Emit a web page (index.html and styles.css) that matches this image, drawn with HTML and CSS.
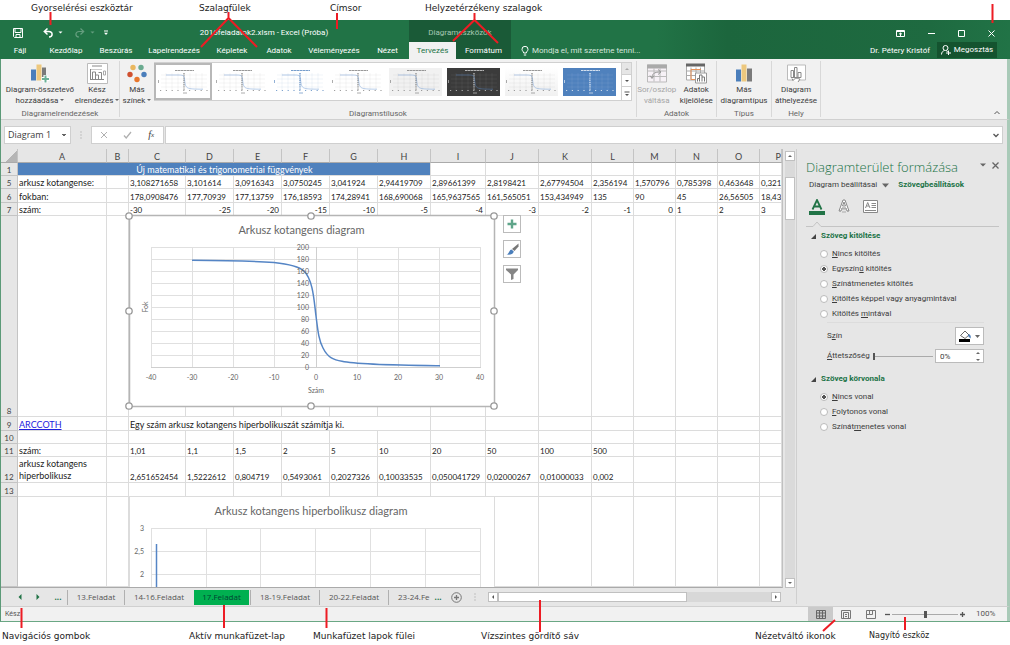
FILE: index.html
```html
<!DOCTYPE html>
<html lang="hu">
<head>
<meta charset="utf-8">
<title>Excel képernyő részei</title>
<link rel="stylesheet" href="styles.css">
</head>
<body>
<svg class="defs" aria-hidden="true">
  <symbol id="thumb" viewBox="0 0 53 28">
    <path d="M4 7h46M4 11h46M4 15h46M4 19h46M9 5v17M15 5v17M21 5v17M33 5v17M39 5v17M45 5v17" stroke="currentColor" stroke-opacity=".12" stroke-width=".6" fill="none"/>
    <path d="M18 2.500h19" stroke="currentColor" stroke-width="1.200" stroke-dasharray="2.500 .4" opacity=".75"/>
    <path d="M27 5v17" stroke="currentColor" stroke-width="1.500" stroke-dasharray="1.400 .8" opacity=".7"/>
    <path d="M3 22.500h48" stroke="currentColor" stroke-width="1" stroke-dasharray="1.200 4.600" opacity=".7"/>
    <path d="M26 25h4M1.500 12v3" stroke="currentColor" stroke-width="1" opacity=".6"/>
    <path d="M9 7h12c7 0 6 1 7 8 1 6 3 6 18 6.200" stroke="#5b8fcf" stroke-opacity=".6" stroke-width=".7" fill="none"/>
  </symbol>
</svg>
<div class="captions captions-top">
  <span>Gyorselérési eszköztár</span><span>Szalagfülek</span><span>Címsor</span><span>Helyzetérzékeny szalagok</span>
</div>

<div class="window">
  <header class="head">
    <div class="titlebar">
      <div class="qat">
        <button aria-label="Mentés"><svg width="10" height="10" viewBox="0 0 10 10" fill="none" stroke="#fff"><path d="M.5 .5h9v9h-8l-1-1zM2 .5v4h6v-4M3 9.500v-3h4v3"/></svg></button>
        <button aria-label="Visszavonás"><svg width="20" height="10" viewBox="0 0 20 10" fill="none" stroke="#fff" stroke-width="1.500"><path d="M4.500 .5L1.300 3.500l3.200 3M1.500 3.500h4.300c4.500 0 4.200 5.500 .2 5.500"/><path d="M15.500 3.500h4l-2 2z" fill="#fff" stroke="none"/></svg></button>
        <button aria-label="Ismét" class="dim"><svg width="20" height="10" viewBox="0 0 20 10" fill="none" stroke="#fff" stroke-width="1.200"><path d="M5.500 .5l3.200 3-3.200 3M8.500 3.500H4.200C-.3 3.500 0 9 4 9"/><path d="M15.500 3.500h4l-2 2z" fill="#fff" stroke="none"/></svg></button>
        <button aria-label="Testreszabás"><svg width="6" height="6" viewBox="0 0 6 6"><path d="M1 .5h4v1H1zM1 2.800h4L3 5z" fill="#fff"/></svg></button>
      </div>
      <div class="doc-title">2016feladatok2.xlsm - Excel (Próba)</div>
      <div class="context-title">Diagrameszközök</div>
      <div class="win-buttons">
        <button aria-label="Menüszalag"><svg width="9" height="7" viewBox="0 0 9 7" fill="none" stroke="#fff"><path d="M.5 .5h8v6h-8zM.5 1.500h8M4.500 6V3M3 4.300L4.500 3 6 4.300"/></svg></button>
        <button aria-label="Kis méret"><svg width="7" height="7" viewBox="0 0 7 7" stroke="#fff"><path d="M0 3.500h7"/></svg></button>
        <button aria-label="Teljes méret"><svg width="7" height="7" viewBox="0 0 7 7" fill="none" stroke="#fff"><path d="M.5 .5h6v6h-6z"/></svg></button>
        <button aria-label="Bezárás"><svg width="7" height="7" viewBox="0 0 7 7" stroke="#fff"><path d="M.5 .5l6 6M6.500 .5l-6 6"/></svg></button>
      </div>
    </div>
    <nav class="tabs">
      <button>Fájl</button><button>Kezdőlap</button><button>Beszúrás</button><button>Lapelrendezés</button><button>Képletek</button><button>Adatok</button><button>Véleményezés</button><button>Nézet</button><button class="active">Tervezés</button><button class="context">Formátum</button>
      <button class="tell"><svg width="8" height="10" viewBox="0 0 8 10" fill="none" stroke="#fff"><path d="M2.700 7C2.700 5.500 1 5 1 3.300a3 3 0 0 1 6 0C7 5 5.300 5.500 5.300 7zM2.800 9h2.400"/></svg>Mondja el, mit szeretne tenni...</button>
      <span class="user">Dr. Pétery Kristóf</span>
      <button class="share"><svg width="10" height="10" viewBox="0 0 10 10" fill="none" stroke="#fff"><circle cx="4.500" cy="3" r="2.500"/><path d="M.5 9.500c0-2.500 1.500-3.500 3-4M5.500 5.500L6.500 7M5 8h5M7.500 5.500v4.500"/></svg>Megosztás</button>
    </nav>
  </header>

  <section class="ribbon">
    <div class="group g-layouts">
      <div class="tools">
        <button class="wide"><svg width="20" height="20" viewBox="0 0 20 20"><path d="M1 6h5v11H1z" fill="#4a7ebb"/><path d="M6.500 1h5v16h-5z" fill="#edc87e"/><path d="M12 4h4v13h-4z" fill="#7a7a7a"/><path d="M11.500 15.500h8M15.500 11.500v8" stroke="#fff" stroke-width="4"/><path d="M12 15.500h7M15.500 12v7" stroke="#6bb197" stroke-width="2"/></svg><span>Diagram-összetevő<br>hozzáadása <i></i></span></button>
        <button><svg width="21" height="21" viewBox="0 0 21 21" fill="none" stroke="#888"><path d="M.5 .5h20v20H.5z" fill="#fff" stroke="#bbb"/><path d="M5 3h10M3 16.500h14M3.500 6v10" /><path d="M5.500 16V9h3v7M8.500 12h3v4M11.500 9.500h3V16"/><path d="M16.500 8h2v4h-2z" stroke="#aaa"/><path d="M4 6.500h11" stroke="#ccc"/></svg><span>Kész<br>elrendezés <i></i></span></button>
      </div>
      <div class="group-name">Diagramelrendezések</div>
    </div>
    <div class="group g-styles">
      <div class="tools">
        <button class="colors"><svg width="20" height="20" viewBox="0 0 20 20"><circle cx="6" cy="4" r="2.700" fill="#e9b75f"/><circle cx="14" cy="4" r="2.700" fill="#6bab90"/><circle cx="17" cy="11" r="2.700" fill="#4a7ebb"/><circle cx="10" cy="16" r="2.700" fill="#e8762c"/><circle cx="3" cy="11" r="2.700" fill="#d0502f"/></svg><span>Más<br>színek <i></i></span></button>
        <div class="gallery">
          <button class="thumb selected" aria-label="1. stílus"><svg><use href="#thumb"/></svg></button>
          <button class="thumb" aria-label="2. stílus"><svg><use href="#thumb"/></svg></button>
          <button class="thumb blue" aria-label="3. stílus"><svg><use href="#thumb"/></svg></button>
          <button class="thumb" aria-label="4. stílus"><svg><use href="#thumb"/></svg></button>
          <button class="thumb gray" aria-label="5. stílus"><svg><use href="#thumb"/></svg></button>
          <button class="thumb dark" aria-label="6. stílus"><svg><use href="#thumb"/></svg></button>
          <button class="thumb shade" aria-label="7. stílus"><svg><use href="#thumb"/></svg></button>
          <button class="thumb solid" aria-label="8. stílus"><svg><use href="#thumb"/></svg></button>
          <div class="gallery-nav">
            <button class="off" aria-label="Fel"><svg width="6" height="4" viewBox="0 0 6 4"><path d="M1 3h4L3 1z" fill="#aaa"/></svg></button>
            <button aria-label="Le"><svg width="6" height="4" viewBox="0 0 6 4"><path d="M1 1h4L3 3z" fill="#555"/></svg></button>
            <button aria-label="Egyebek"><svg width="6" height="6" viewBox="0 0 6 6"><path d="M.5 .5h5v1h-5zM1 3h4L3 5z" fill="#555"/></svg></button>
          </div>
        </div>
      </div>
      <div class="group-name">Diagramstílusok</div>
    </div>
    <div class="group g-data">
      <div class="tools">
        <button class="dim"><svg width="20" height="18" viewBox="0 0 20 18" fill="none" stroke="#bbb"><path d="M.5 .5h19v17H.5zM.5 6.500h19M.5 12h19M7 4v13M13 4v13" fill="#f7f2f7"/><path d="M0 0h20v4H0z" fill="#aaa" stroke="none"/><path d="M5 13.500c0-4 2-6 8-6M11 5l3 2.500-3 2.500M3 11l2 3 2-3" stroke="#999"/></svg><span>Sor/oszlop<br>váltása</span></button>
        <button><svg width="21" height="20" viewBox="0 0 21 20" fill="none"><path d="M.5 1.500h18v15H.5zM.5 7.500h18M.5 12h18M5 4v12M10 4v12M14.500 4v12" fill="#fff" stroke="#aaa"/><path d="M0 0h19v3H0z" fill="#666"/><path d="M15 6H5v10h5" stroke="#e8935a"/><path d="M9.500 9.500h11v10h-11z" fill="#fff" stroke="#999"/><path d="M11.500 18v-3h2v3M13.500 17v-5.500h2.500V18M16 13.500h2.500V18" stroke="#777"/></svg><span>Adatok<br>kijelölése</span></button>
      </div>
      <div class="group-name">Adatok</div>
    </div>
    <div class="group g-type">
      <div class="tools"><button><svg width="16" height="18" viewBox="0 0 16 18"><path d="M0 5h5v12H0z" fill="#4a7ebb"/><path d="M5.500 0h5v17h-5z" fill="#edc87e"/><path d="M11 4h5v13h-5z" fill="#7a7a7a"/></svg><span>Más<br>diagramtípus</span></button></div>
      <div class="group-name">Típus</div>
    </div>
    <div class="group g-place">
      <div class="tools"><button><svg width="19" height="18" viewBox="0 0 19 18" fill="none" stroke="#888"><path d="M.5 .5h18v15H.5z" fill="#fff" stroke="#bbb"/><path d="M4 13V6h2.500v7M7.500 13V3H10v10M11 13V8h3v5H4"/><path d="M6 16c2-3 5-2 7-1.500L11 17.500M6 16l-1-2" fill="#fff"/></svg><span>Diagram<br>áthelyezése</span></button></div>
      <div class="group-name">Hely</div>
    </div>
    <button class="collapse" aria-label="Összecsukás"><svg width="6" height="5" viewBox="0 0 6 5" fill="none" stroke="#555"><path d="M.5 4L3 1.500 5.500 4"/></svg></button>
  </section>

  <section class="formula-bar">
    <select class="name-box" aria-label="Név mező"><option>Diagram 1</option></select>
    <span class="grip"></span>
    <div class="fx">
      <button aria-label="Mégse"><svg width="8" height="8" viewBox="0 0 8 8" stroke="#b0b0b0"><path d="M1 1l6 6M7 1L1 7"/></svg></button>
      <button aria-label="Beírás"><svg width="9" height="8" viewBox="0 0 9 8" fill="none" stroke="#b0b0b0" stroke-width="1.300"><path d="M1 4.500L3.200 7 8 1"/></svg></button>
      <button class="fx-sign" aria-label="Függvény beszúrása">f<sub>x</sub></button>
    </div>
    <div class="formula">
      <input type="text" aria-label="Szerkesztőléc">
      <svg width="6" height="5" viewBox="0 0 6 5" fill="none" stroke="#555" stroke-width="1.300"><path d="M.5 1L3 3.500 5.500 1"/></svg>
    </div>
  </section>

  <main class="work">
    <div class="book">
      <div class="sheet-row">
        <div class="sheet">
          <table>
            <colgroup><col class="w18"><col class="w89"><col class="w22"><col class="w57"><col class="w48"><col class="w48"><col class="w48"><col class="w48"><col class="w53"><col class="w55"><col class="w53"><col class="w53"><col class="w42"><col class="w42"><col class="w42"><col class="w42"><col></colgroup>
            <thead><tr><th class="corner"></th><th>A</th><th>B</th><th>C</th><th>D</th><th>E</th><th>F</th><th>G</th><th>H</th><th>I</th><th>J</th><th>K</th><th>L</th><th>M</th><th>N</th><th>O</th><th class="cut">P</th></tr></thead>
            <tbody>
            <tr><th>1</th><td colspan="8" class="banner">Új matematikai és trigonometriai függvények</td><td></td><td></td><td></td><td></td><td></td><td></td><td></td><td></td></tr>
            <tr><th>5</th><td class="words">arkusz kotangense:</td><td></td><td>3,108271658</td><td>3,101614</td><td>3,0916343</td><td>3,0750245</td><td>3,041924</td><td>2,94419709</td><td>2,89661399</td><td>2,8198421</td><td>2,67794504</td><td>2,356194</td><td>1,570796</td><td>0,785398</td><td>0,463648</td><td>0,321</td></tr>
            <tr class="h14"><th>6</th><td class="words">fokban:</td><td></td><td>178,0908476</td><td>177,70939</td><td>177,13759</td><td>176,18593</td><td>174,28941</td><td>168,690068</td><td>165,9637565</td><td>161,565051</td><td>153,434949</td><td>135</td><td>90</td><td>45</td><td>26,56505</td><td>18,43</td></tr>
            <tr><th>7</th><td class="words">szám:</td><td></td><td>-30</td><td class="r">-25</td><td class="r">-20</td><td class="r">-15</td><td class="r">-10</td><td class="r">-5</td><td class="r">-4</td><td class="r">-3</td><td class="r">-2</td><td class="r">-1</td><td class="r">0</td><td>1</td><td>2</td><td>3</td></tr>
            <tr class="h201"><th>8</th><td></td><td></td><td></td><td></td><td></td><td></td><td></td><td></td><td></td><td></td><td></td><td></td><td></td><td></td><td></td><td></td></tr>
            <tr class="h14"><th>9</th><td class="words"><a href="#arccoth">ARCCOTH</a></td><td></td><td colspan="6" class="words">Egy szám arkusz kotangens hiperbolikuszát számítja ki.</td><td></td><td></td><td></td><td></td><td></td><td></td><td></td><td></td></tr>
            <tr><th>10</th><td></td><td></td><td></td><td></td><td></td><td></td><td></td><td></td><td></td><td></td><td></td><td></td><td></td><td></td><td></td><td></td></tr>
            <tr><th>11</th><td class="words">szám:</td><td></td><td>1,01</td><td>1,1</td><td>1,5</td><td>2</td><td>5</td><td>10</td><td>20</td><td>50</td><td>100</td><td>500</td><td></td><td></td><td></td><td></td></tr>
            <tr class="h26"><th>12</th><td class="words two-line">arkusz kotangens<br>hiperbolikusz</td><td></td><td>2,651652454</td><td>1,5222612</td><td>0,804719</td><td>0,5493061</td><td>0,2027326</td><td>0,10033535</td><td>0,050041729</td><td>0,02000267</td><td>0,01000033</td><td>0,002</td><td></td><td></td><td></td><td></td></tr>
            <tr class="h14"><th>13</th><td></td><td></td><td></td><td></td><td></td><td></td><td></td><td></td><td></td><td></td><td></td><td></td><td></td><td></td><td></td><td></td></tr>
            <tr class="rest"><th></th><td></td><td></td><td></td><td></td><td></td><td></td><td></td><td></td><td></td><td></td><td></td><td></td><td></td><td></td><td></td><td></td></tr>
            </tbody>
          </table>
          <svg class="chart chart-one" width="374" height="199" viewBox="125 211 374 199">
            <path d="M129.500 215.500h365v191h-365z" fill="#fff" stroke="#b5b5b5" stroke-width="1.500"/>
            <path d="M151 247.500h330M151 259.500h330M151 271.500h330M151 283.500h330M151 295.500h330M151 307.500h330M151 319.500h330M151 331.500h330M151 343.500h330M151 355.500h330M151.500 247v120M192.500 247v120M233.500 247v120M274.500 247v120M357.500 247v120M398.500 247v120M439.500 247v120M480.500 247v120" stroke="#e0e0e0"/>
            <path d="M151 367.500h330M316.500 247v120" stroke="#cfcfcf"/>
            <path d="M192 260.300C220 260.500 250 261 274 262.500C290 264.200 299 266.500 304 271C313 280 314 300 316 316C318 332 319 341 323 348C328 358 334 360 342 361.300C358 365 400 365.300 440 365.700" fill="none" stroke="#5585c5" stroke-width="1.500"/>
            <text class="chart-title" x="301.500" y="234">Arkusz kotangens diagram</text>
            <g class="axis end"><text x="309" y="250">200</text><text x="309" y="262">180</text><text x="309" y="274">160</text><text x="309" y="286">140</text><text x="309" y="298">120</text><text x="309" y="310">100</text><text x="309" y="322">80</text><text x="309" y="334">60</text><text x="309" y="346">40</text><text x="309" y="358">20</text><text x="309" y="370">0</text></g>
            <g class="axis mid"><text x="151" y="380">-40</text><text x="192" y="380">-30</text><text x="233" y="380">-20</text><text x="274" y="380">-10</text><text x="316" y="380">0</text><text x="357" y="380">10</text><text x="398" y="380">20</text><text x="439" y="380">30</text><text x="480" y="380">40</text><text x="316" y="393">Szám</text><text transform="translate(148 307) rotate(-90)">Fok</text></g>
            <g fill="#fff" stroke="#999" stroke-width="1.300"><circle cx="129" cy="216" r="3.200"/><circle cx="311" cy="216" r="3.200"/><circle cx="494" cy="216" r="3.200"/><circle cx="129" cy="311" r="3.200"/><circle cx="494" cy="311" r="3.200"/><circle cx="129" cy="406" r="3.200"/><circle cx="311" cy="406" r="3.200"/><circle cx="494" cy="406" r="3.200"/></g>
          </svg>
          <div class="chart-tools">
            <button aria-label="Diagramelemek"><svg width="12" height="12" viewBox="0 0 12 12"><path d="M1.500 6h9M6 1.500v9" stroke="#5fa58a" stroke-width="2.400"/></svg></button>
            <button aria-label="Diagramstílusok"><svg width="13" height="13" viewBox="0 0 13 13"><path d="M12.500 .5v3L8.500 8 6 6z" fill="#777"/><path d="M5.500 6.500l2.300 2C7 11.500 4 12 .5 11.500 3 11 3 7 5.500 6.500z" fill="#4a7ebb"/></svg></button>
            <button aria-label="Diagramszűrők"><svg width="12" height="12" viewBox="0 0 12 12"><path d="M0 .5h12v1.500L7.500 6.500V11L5 12V6.500L0 2z" fill="#858585"/></svg></button>
          </div>
          <svg class="chart chart-two" width="366" height="93" viewBox="129 497 366 93">
            <path d="M129 497h366v93H129z" fill="#fff"/><path d="M494.500 497v93M129.500 497v93" stroke="#dcdcdc"/>
            <path d="M151 528.500h330M151 551.500h330M151 574.500h330M151.500 528v62M206.500 528v62M260.500 528v62M315.500 528v62M370.500 528v62M425.500 528v62M480.500 528v62" stroke="#e0e0e0"/>
            <path d="M156.500 544v46" stroke="#5585c5" stroke-width="1.500"/>
            <text class="chart-title" x="311" y="515">Arkusz kotangens hiperbolikusz diagram</text>
            <g class="axis end"><text x="144" y="531">3</text><text x="144" y="554">2,5</text><text x="144" y="577">2</text></g>
          </svg>
        </div>
        <div class="vscroll">
          <button aria-label="Fel"><svg width="6" height="4" viewBox="0 0 6 4"><path d="M1 3h4L3 1z" fill="#666"/></svg></button>
          <div class="track"><div class="thumb-v"></div></div>
          <button aria-label="Le"><svg width="6" height="4" viewBox="0 0 6 4"><path d="M1 1h4L3 3z" fill="#666"/></svg></button>
        </div>
      </div>
      <div class="sheet-tabs">
        <button class="nav" aria-label="Előző"><svg width="4" height="6" viewBox="0 0 4 6"><path d="M3.500 0v6L.5 3z" fill="#217346"/></svg></button>
        <button class="nav" aria-label="Következő"><svg width="4" height="6" viewBox="0 0 4 6"><path d="M.5 0v6l3-3z" fill="#217346"/></svg></button>
        <button class="nav more">...</button>
        <button class="tab t57">13.Feladat</button><button class="tab t69">14-16.Feladat</button><button class="tab t57 current">17.Feladat</button><button class="tab t69">18-19.Feladat</button><button class="tab t69">20-22.Feladat</button><button class="tab last">23-24.Fe <b>...</b></button>
        <button class="add" aria-label="Új lap"><svg width="11" height="11" viewBox="0 0 11 11" fill="none" stroke="#777"><circle cx="5.500" cy="5.500" r="4.800"/><path d="M5.500 3v5M3 5.500h5" stroke-width="1.300"/></svg></button>
        <span class="grip"></span>
        <div class="hscroll">
          <button aria-label="Balra"><svg width="4" height="6" viewBox="0 0 4 6"><path d="M3 1v4L1 3z" fill="#555"/></svg></button>
          <div class="track-h"><div class="thumb-h"></div></div>
          <button aria-label="Jobbra"><svg width="4" height="6" viewBox="0 0 4 6"><path d="M1 1v4l2-2z" fill="#555"/></svg></button>
        </div>
      </div>
    </div>

    <aside class="pane">
      <div class="pane-head"><h2>Diagramterület formázása</h2>
        <button aria-label="Beállítások"><svg width="6" height="4" viewBox="0 0 6 4"><path d="M0 .5h6L3 3.500z" fill="#666"/></svg></button>
        <button aria-label="Bezárás"><svg width="7" height="7" viewBox="0 0 7 7" stroke="#666" stroke-width="1.300"><path d="M.5 .5l6 6M6.500 .5l-6 6"/></svg></button></div>
      <div class="pane-switch"><button>Diagram beállításai <svg width="7" height="5" viewBox="0 0 7 5"><path d="M0 .5h7L3.500 4.500z" fill="#666"/></svg></button><button class="on">Szövegbeállítások</button></div>
      <div class="pane-icons">
        <button aria-label="Szövegkitöltés"><svg width="16" height="16" viewBox="0 0 16 16"><path d="M3.500 10.500L8 1l4.500 9.500M5 7.500h6" fill="none" stroke="#217346" stroke-width="1.800"/><path d="M0 12h16v4H0z" fill="#217346"/></svg></button>
        <button aria-label="Szöveghatások"><svg width="12" height="16" viewBox="0 0 12 16" fill="none" stroke="#888"><path d="M1 12L5 1h2l4 11H9L8 9H4l-1 3zM4.500 7L6 3l1.500 4z" fill="#fff"/><path d="M2 13l2-3h4l2 3M4 13h4" stroke="#aaa"/></svg></button>
        <button aria-label="Szövegdoboz"><svg width="15" height="14" viewBox="0 0 15 14" fill="none" stroke="#888"><path d="M.5 .5h14v12H.5z" fill="#fff"/><path d="M2.500 8L4.700 2.500 7 8M3.500 6H6M8.500 3.500H13M8.500 5.500H13M8.500 7.500H13M2 10.500h11"/></svg></button>
      </div>
      <div class="notch"><svg height="6" width="20" viewBox="0 0 20 6" fill="none" stroke="#c4c4c4"><path d="M0 5.500h7L11 1l4 4.500h5"/></svg><span></span></div>
      <section class="opts">
        <h3><svg width="5" height="5" viewBox="0 0 5 5"><path d="M5 0v5H0z" fill="#444"/></svg>Szöveg kitöltése</h3>
        <label><input type="radio" name="fill"><span><u>N</u>incs kitöltés</span></label>
        <label><input type="radio" name="fill" checked><span>Egyszín<u>ű</u> kitöltés</span></label>
        <label><input type="radio" name="fill"><span><u>S</u>zínátmenetes kitöltés</span></label>
        <label><input type="radio" name="fill"><span><u>K</u>itöltés képpel vagy anyagmintával</span></label>
        <label><input type="radio" name="fill"><span>Kitöltés <u>m</u>intával</span></label>
        <div class="color-row"><span>S<u>z</u>ín</span><button aria-label="Szín"><svg width="22" height="13" viewBox="0 0 22 13"><path d="M1.500 5.500L6 1l4 4-4 3.500z" fill="#fff" stroke="#666"/><path d="M10 4c2 1 2 3 1.500 4.500L9 6z" fill="#4a7ebb"/><path d="M0 9h11v3H0z" fill="#000"/><path d="M16 5h5l-2.500 3z" fill="#666"/></svg></button></div>
        <div class="alpha-row"><label for="alpha"><u>Á</u>ttetszőség</label><input type="range" id="alpha" class="range start" value="0"><div class="spin"><input type="text" value="0%" aria-label="Áttetszőség értéke"><svg width="6" height="11" viewBox="0 0 6 11"><path d="M1 3h4L3 1zM1 8h4l-2 2z" fill="#666"/></svg></div></div>
      </section>
      <section class="opts outline">
        <h3><svg width="5" height="5" viewBox="0 0 5 5"><path d="M5 0v5H0z" fill="#444"/></svg>Szöveg körvonala</h3>
        <label><input type="radio" name="line" checked><span><u>N</u>incs vonal</span></label>
        <label><input type="radio" name="line"><span><u>F</u>olytonos vonal</span></label>
        <label><input type="radio" name="line"><span>Színát<u>m</u>enetes vonal</span></label>
      </section>
    </aside>
  </main>

  <footer class="status">
    <span class="ready">Kész</span>
    <button class="view on" aria-label="Normál"><svg width="10" height="9" viewBox="0 0 10 9" fill="none" stroke="#666"><path d="M.5 .5h9v8h-9zM.5 3h9M.5 6h9M3.500 .5v8M6.500 .5v8"/></svg></button>
    <button class="view" aria-label="Lapelrendezés"><svg width="10" height="9" viewBox="0 0 10 9" fill="none" stroke="#777"><path d="M.5 .5h9v8h-9zM2.500 2.500h5v6M2.500 2.500v6M4 4.500h2M4 6.500h2"/></svg></button>
    <button class="view" aria-label="Oldaltörés"><svg width="10" height="9" viewBox="0 0 10 9" fill="none" stroke="#777"><path d="M.5 .5h9v8h-9zM3.500 .5v4h3v-4M.5 4.500h3"/></svg></button>
    <button class="zoom-btn" aria-label="Kicsinyítés"><svg width="5" height="5" viewBox="0 0 5 5"><path d="M0 2.500h5" stroke="#555" stroke-width="1.300"/></svg></button>
    <input type="range" class="range zoom" aria-label="Nagyítás" value="50">
    <button class="zoom-btn" aria-label="Nagyítás növelése"><svg width="5" height="5" viewBox="0 0 5 5"><path d="M0 2.500h5M2.500 0v5" stroke="#555" stroke-width="1.300"/></svg></button>
    <span class="percent">100%</span>
  </footer>
</div>

<div class="captions captions-bottom">
  <span>Navigációs gombok</span><span>Aktív munkafüzet-lap</span><span>Munkafüzet lapok fülei</span><span>Vízszintes gördítő sáv</span><span>Nézetváltó ikonok</span><span class="small">Nagyító eszköz</span>
</div>
<svg class="pointers" viewBox="0 0 1010 645" fill="none" stroke="#ed1c24" stroke-width="2" aria-hidden="true">
  <path d="M50.500 12v13M228.500 12v6M201 47l27.500-29L257 47M337 13v16M474.500 13v7M453 41l21.500-21L498 43M992.500 4v19M21.500 608v20M224 605v23M326.500 608v20M540 600v32M835 620l-12 11M905 617v13"/>
</svg>
</body>
</html>
```
FILE: styles.css
```css
* { box-sizing: border-box; }
body {
  margin: 0;
  min-height: 100vh;
  position: relative;
  display: flex;
  flex-direction: column;
  background: #fff;
  color: #3c3c3c;
  font: 8px/10px Roboto, "Open Sans", sans-serif;
}
button, input, select { font: inherit; color: inherit; }
button { border: 0; padding: 0; background: none; display: flex; align-items: center; justify-content: center; white-space: nowrap; }
svg { display: block; flex: none; }
.defs { position: absolute; width: 0; height: 0; }

.captions { display: grid; font: 9px/16px "DejaVu Sans", sans-serif; color: #222; white-space: nowrap; }
.captions-top { height: 20px; padding-left: 31px; grid-template-columns: 168px 131px 95px 1fr; }
.captions-bottom { height: 23px; padding: 6px 0 0 2px; grid-template-columns: 187px 124px 168px 274px 114px 1fr; }
.captions .small { font-size: 8px; }
.pointers { position: absolute; top: 0; left: 0; width: 1010px; height: 645px; pointer-events: none; }

.window { flex: 1; display: flex; flex-direction: column; border-left: 1px solid #5c9a78; border-bottom: 1px solid #6aa784; }
.head { background: linear-gradient(90deg, #217346 65%, #1c663d 72%, #1e6a40 92%, #217346); color: #fff; margin-left: -1px; }
.titlebar { display: grid; grid-template-columns: 119px 290px 102px 1fr; height: 22px; }
.qat { display: flex; align-items: center; padding-left: 13px; gap: 20px; }
.qat button:nth-child(3) { margin-left: -8px; }
.qat button:nth-child(4) { margin-left: -12px; }
.qat .dim { opacity: .3; }
.doc-title { text-align: center; line-height: 25px; }
.context-title { background: #1a5a37; color: #a6c8b4; text-align: center; line-height: 26px; }
.win-buttons { display: flex; justify-content: flex-end; align-items: center; gap: 23px; padding-right: 15px; }
.tabs { display: grid; grid-template-columns: 40px 52px 48px 68px 48px 46px 64px 43px 47px 55px 1fr auto 60px; height: 17px; padding-right: 13px; }
.tabs .active { background: #f1f1f1; color: #217346; }
.tabs .context { background: #1a5a37; }
.tabs .tell { justify-content: flex-start; gap: 3px; padding-left: 10px; color: #d5e5dc; }
.tabs .user { line-height: 17px; margin-right: 7px; }
.tabs .share { background: #14532f; gap: 3px; margin-bottom: 1px; }

.ribbon { display: flex; height: 61px; background: #f1f1f1; border-bottom: 1px solid #d0d0d0; border-right: 3px solid #a9cab8; padding-top: 2px; }
.group { display: flex; flex-direction: column; border-right: 1px solid #d8d8d8; height: 56px; }
.tools { display: flex; flex: 1; justify-content: center; }
.tools > button { flex-direction: column; justify-content: flex-start; padding-top: 2px; width: 40px; line-height: 11px; }
.tools > button svg { height: 21px; }
.tools span { text-align: center; }
.tools i { display: inline-block; border: 2px solid transparent; border-top-color: #666; border-bottom: 0; vertical-align: 2px; }
.tools .dim { color: #a5a5a5; }
.group-name { text-align: center; line-height: 10px; color: #666; height: 8px; }
.g-layouts { width: 119px; }
.g-layouts .wide { width: 74px; }
.g-styles { flex: 0 1 513px; }
.g-styles .tools > .colors { width: 34px; }
.g-data { width: 80px; }
.g-type { width: 55px; }
.g-place { width: 49px; }
.collapse { margin-left: auto; align-self: flex-end; padding: 4px 7px; }
.gallery { display: flex; flex: 1; height: 39px; margin: 1px 4px 0 0; background: #fff; border: 1px solid #d0d0d0; gap: 5px; }
.gallery .thumb { width: 53px; height: 28px; margin-top: 5px; color: #777; }
.gallery .thumb svg { width: 53px; height: 28px; }
.gallery .selected { border: 2px solid #b8b8b8; width: 58px; height: 37px; margin: 0 -2px 0 -1px; }
.gallery .blue { color: #4a7ebb; }
.gallery .gray { background: #f1f1f1; }
.gallery .dark { background: #3b3b3b; color: #ddd; }
.gallery .shade { background: linear-gradient(#fff, #f1f1f1); }
.gallery .solid { background: #4f81bd; color: #fff; }
.gallery-nav { width: 10px; margin-left: auto; display: grid; border-left: 1px solid #d0d0d0; }
.gallery-nav button + button { border-top: 1px solid #d0d0d0; }
.gallery-nav .off { background: #e6e6e6; }

.formula-bar { display: flex; height: 29px; padding: 6px 4px 5px 3px; background: #e6e6e6; border-right: 3px solid #a9cab8; }
.name-box { width: 67px; appearance: none; border: 1px solid #cfcfcf; border-radius: 0; padding: 0 3px; font: 9px/16px "Open Sans", sans-serif;
  background: linear-gradient(135deg, #666 50%, transparent 50%) 59px 7px / 2px 3px no-repeat, linear-gradient(225deg, #666 50%, transparent 50%) 57px 7px / 2px 3px no-repeat, #fff; }
.grip { width: 20px; background: radial-gradient(circle, #999 1px, transparent 1px) 50% 50% / 3px 3px; background-clip: content-box; padding: 5px 9px; }
.fx { display: flex; width: 73px; border: 1px solid #cfcfcf; background: #fff; }
.fx button { flex: 1; }
.fx .fx-sign { font: italic 10px/14px "Liberation Serif", serif; }
.fx-sign sub { font-size: 7px; }
.formula { flex: 1; margin-left: 1px; display: flex; align-items: center; background: #fff; border: 1px solid #cfcfcf; padding-right: 3px; }
.formula input { flex: 1; border: 0; height: 14px; background: none; }

.work { flex: 1; display: flex; background: #e6e6e6; border-right: 3px solid #a9cab8; }
.book { flex: 1; display: flex; flex-direction: column; min-width: 0; margin-left: -1px; }
.sheet-row { flex: 1; display: flex; }
.sheet { flex: 1; min-width: 0; position: relative; overflow: hidden; border-right: 1px solid #c0c0c0; border-bottom: 1px solid #aaa; margin-left: 1px; }
.sheet table { width: 100%; height: 438px; table-layout: fixed; border-collapse: separate; border-spacing: 0; background: #fff; color: #222; font: 8px/10px Lato, sans-serif; }
.w18 { width: 17px; } .w89 { width: 89px; } .w22 { width: 22px; } .w57 { width: 57px; } .w48 { width: 48px; } .w53 { width: 53px; } .w55 { width: 55px; } .w42 { width: 42px; }
.sheet tr { height: 13px; }
.sheet thead tr, .sheet .h14 { height: 14px; }
.sheet .h201 { height: 201px; }
.sheet .h26 { height: 26px; }
.sheet .rest { height: auto; }
.sheet td, .sheet th { padding: 0 0 0 1px; border-right: 1px solid #dcdcdc; border-bottom: 1px solid #dcdcdc; white-space: nowrap; overflow: hidden; vertical-align: bottom; text-align: left; }
.sheet .words, .sheet .banner { font-size: 9px; line-height: 11px; }
.sheet .two-line { line-height: 12px; }
.sheet th { background: #e6e6e6; color: #444; font-weight: normal; text-align: center; border-color: #c4c4c4; padding: 0; }
.sheet thead th { border-bottom-color: #aaa; font-size: 9px; line-height: 11px; }
.sheet thead .cut { text-align: right; }
.sheet .corner { background: linear-gradient(135deg, #e6e6e6 60%, #b5b5b5 60%); }
.sheet td.r { text-align: right; padding-right: 2px; }
.sheet .banner { background: #4f81bd; color: #fff; text-align: center; }
.sheet a { color: #22d; }
.chart { position: absolute; }
.chart-one { left: 124px; top: 62px; }
.chart-two { left: 128px; top: 348px; }
.chart text { fill: #666; font-family: Lato, sans-serif; }
.chart-title { font-size: 11px; text-anchor: middle; }
.axis { font-size: 7px; }
.axis.end { text-anchor: end; }
.axis.mid { text-anchor: middle; }
.chart-tools { position: absolute; left: 502px; top: 66px; display: grid; gap: 7px; }
.chart-tools button { width: 18px; height: 18px; border: 1px solid #bbb; background: #fff; }

.vscroll { width: 13px; display: flex; flex-direction: column; padding: 2px 1px 0 2px; }
.vscroll button, .hscroll button { width: 10px; height: 10px; background: #fff; border: 1px solid #c0c0c0; }
.track { flex: 1; background: #dadada; padding-top: 16px; }
.thumb-v { height: 43px; width: 10px; background: #fff; border: 1px solid #c0c0c0; }
.sheet-tabs { display: flex; align-items: center; height: 18px; color: #555; padding-left: 11px; font-family: "Open Sans", sans-serif; }
.nav { width: 18px; }
.nav.more, .tab b { color: #217346; font-weight: bold; }
.nav.more { padding-left: 2px; width: 20px; }
.tab { height: 15px; border-left: 1px solid #b0b0b0; }
.t57 { width: 57px; }
.t69 { width: 69px; }
.tab.current { background: #00b050; color: #043; border: 1px solid #e6e6e6; border-width: 0 1px; }
.tab.last { padding-left: 9px; gap: 5px; }
.add { margin-left: 10px; }
.sheet-tabs .grip { width: 26px; height: 12px; padding: 2px 12px; }
.hscroll { flex: 1; display: flex; margin-right: 15px; }
.track-h { flex: 1; background: #d8d8d8; }
.thumb-h { width: 69%; height: 10px; background: #fff; border: 1px solid #c0c0c0; }

.pane { flex: 0 0 211px; margin-bottom: 2px; border-left: 1px solid #cfcfcf; padding: 8px 8px 0 9px; }
.pane-head { display: flex; align-items: flex-start; }
.pane h2 { margin: 0; flex: 1; font: 300 13px/20px "Open Sans", sans-serif; color: #217346; white-space: nowrap; }
.pane-head button { height: 16px; margin-left: 6px; }
.pane-switch { display: flex; gap: 9px; height: 16px; padding-left: 3px; }
.pane-switch button { gap: 5px; }
.pane-switch .on, .pane h3 { color: #217346; font-weight: bold; }
.pane-icons { display: flex; align-items: center; height: 27px; gap: 13px; padding-left: 3px; }
.notch { display: flex; margin: 1px 0 3px; }
.notch span { flex: 1; border-bottom: 1px solid #c4c4c4; }
.opts { padding-left: 5px; }
.pane h3 { margin: 0 0 5px; height: 12px; font-size: 8px; line-height: 12px; display: flex; align-items: center; gap: 5px; }
.opts > label { display: flex; align-items: center; height: 14px; margin-left: 9px; gap: 4px; }
.opts > label + label { margin-top: 1px; }
.opts input[type=radio] { appearance: none; margin: 0; width: 8px; height: 8px; border: 1px solid #bbb; border-radius: 50%; background: #fff; }
.opts input[type=radio]:checked { background: radial-gradient(circle, #555 2px, #fff 2px); }
.color-row, .alpha-row { display: flex; align-items: center; justify-content: space-between; margin: 0 15px 0 16px; }
.color-row { border-top: 1px solid #dcdcdc; margin-top: 1px; padding-top: 4px; }
.color-row button { width: 29px; height: 18px; background: #fff; border: 1px solid #bbb; }
.alpha-row { margin-top: 4px; }
.range { appearance: none; margin: 0; height: 8px; background: linear-gradient(#aaa, #aaa) 0 50% / 100% 1px no-repeat; }
.range::-webkit-slider-thumb { appearance: none; width: 2px; height: 7px; background: #555; }
.alpha-row .range { width: 60px; margin-left: 2px; }
.spin { display: flex; align-items: center; width: 49px; height: 14px; background: #fff; border: 1px solid #bbb; padding: 0 2px 0 3px; }
.spin input { width: 36px; border: 0; padding: 0 1px; height: 12px; background: none; }
.outline { margin-top: 10px; }

.status { display: flex; align-items: center; height: 15px; background: #f1f1f1; border-top: 1px solid #d0d0d0; border-right: 3px solid #a9cab8; color: #555; }
.ready { flex: 1; padding-left: 4px; font-size: 7px; }
.view { width: 25px; height: 14px; }
.view.on { background: #cacaca; }
.zoom-btn { width: 9px; }
.range.zoom { width: 66px; }
.range.zoom::-webkit-slider-thumb { width: 3px; }
.percent { width: 40px; padding-left: 9px; }
```
